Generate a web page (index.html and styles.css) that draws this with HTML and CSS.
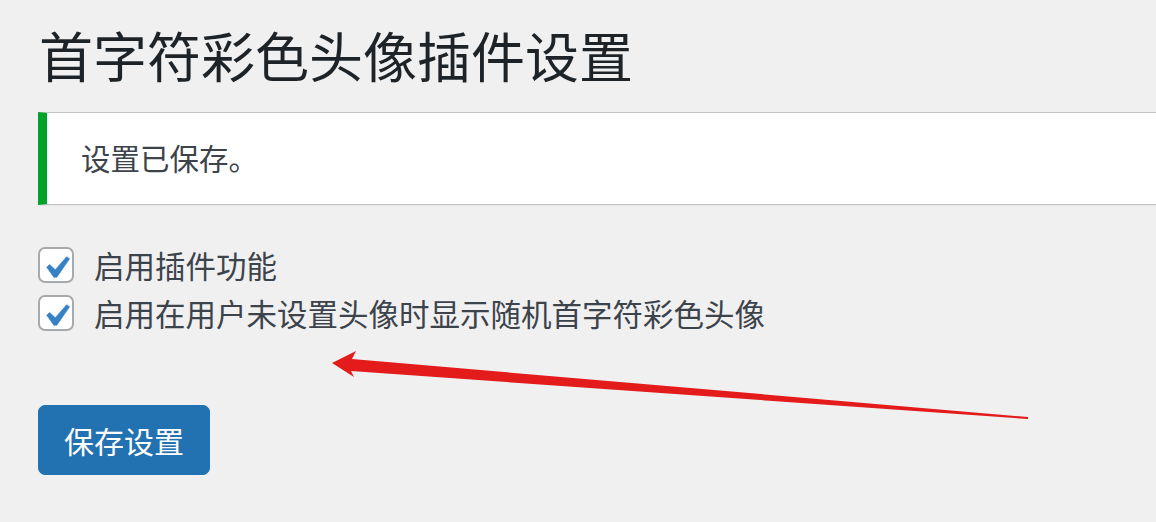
FILE: index.html
```html
<!DOCTYPE html>
<html lang="zh-CN">

<head>
    <meta charset="UTF-8">
    <meta name="viewport" content="width=device-width, initial-scale=1.0">
    <title>首字符彩色头像插件设置</title>
    <link rel="stylesheet" href="styles.css">
</head>

<body>
    <div class="wrap">
        <h1>首字符彩色头像插件设置</h1>

        <div class="notice">
            <p>设置已保存。</p>
        </div>

        <form class="options">
            <label class="option">
                <span class="check">
                    <svg viewBox="0 0 20 20"><path d="M14.83 4.89l1.34.94-5.81 8.38H9.02L5.78 9.67l1.34-1.25 2.57 2.4z"/></svg>
                </span>
                启用插件功能
            </label>
            <label class="option">
                <span class="check">
                    <svg viewBox="0 0 20 20"><path d="M14.83 4.89l1.34.94-5.81 8.38H9.02L5.78 9.67l1.34-1.25 2.57 2.4z"/></svg>
                </span>
                启用在用户未设置头像时显示随机首字符彩色头像
            </label>

            <div class="submit">
                <button type="button" class="button-primary">保存设置</button>
            </div>
        </form>
    </div>

    <!-- 标注箭头 -->
    <svg class="mark" viewBox="0 0 1156 522">
        <polygon points="332,363 356,351 352,359 1028,417 1028,419 351,371 354,377" />
    </svg>
</body>

</html>
```

FILE: styles.css
```css
* {
    margin: 0;
    padding: 0;
    box-sizing: border-box;
}

body {
    background: #f0f0f1;
    color: #3c434a;
    font-family: "Noto Sans CJK SC", "Noto Sans", sans-serif;
    overflow: hidden;
    position: relative;
    width: 1156px;
    height: 522px;
}

.wrap {
    padding: 20px 0 0 38px;
}

h1 {
    font-size: 54px;
    font-weight: 400;
    line-height: 70px;
    color: #1d2327;
    padding-left: 1px;
}

.notice {
    margin: 22px -20px 0 0;
    background: #fff;
    border: 1px solid #c3c4c7;
    border-left: 9px solid #00a32a;
    box-shadow: 0 1px 1px rgba(0, 0, 0, 0.04);
    padding: 24px 0 27px 34px;
}

.notice p {
    font-size: 29.5px;
    line-height: 40px;
}

.options {
    padding-top: 36px;
}

.option {
    display: flex;
    align-items: center;
    gap: 20px;
    height: 48px;
    font-size: 30.5px;
    color: #3c434a;
}

.check {
    width: 36px;
    height: 36px;
    flex: none;
    background: #fff;
    border: 2px solid #a7aaad;
    border-radius: 7px;
    display: flex;
    align-items: center;
    justify-content: center;
}

.check svg {
    width: 44px;
    height: 44px;
    flex: none;
    fill: #3582c4;
    stroke: #3582c4;
    stroke-width: 0.3;
    margin: 6px 0 0 -1px;
}

.submit {
    padding-top: 68px;
}

.button-primary {
    height: 70px;
    padding: 0 25px;
    background: #2271b1;
    border: 1px solid #2271b1;
    border-radius: 7px;
    color: #fff;
    font-family: inherit;
    font-size: 30px;
    line-height: 1;
    cursor: pointer;
}

.mark {
    position: absolute;
    left: 0;
    top: 0;
    width: 1156px;
    height: 522px;
    pointer-events: none;
    fill: #e31b1b;
}
```
